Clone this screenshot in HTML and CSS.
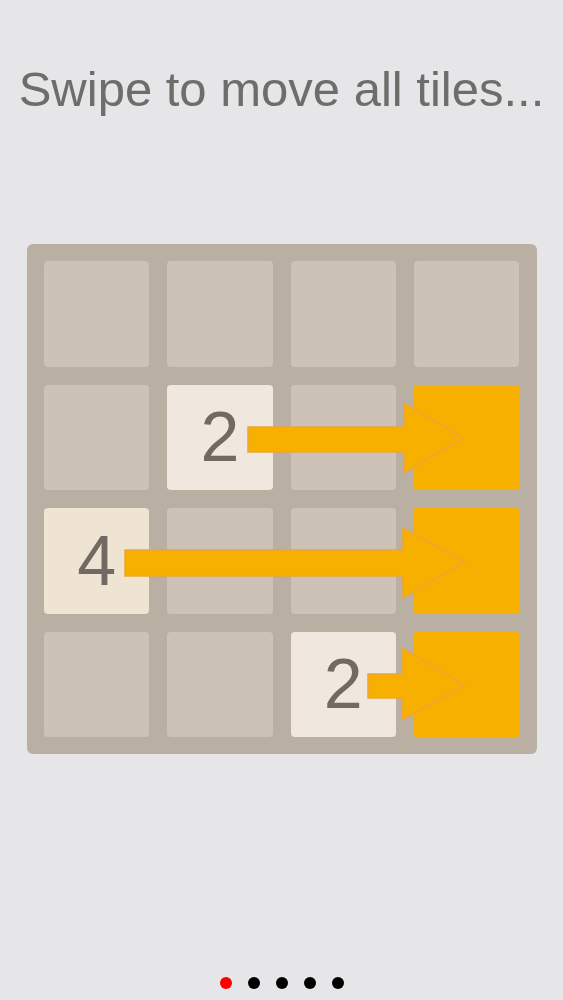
FILE: index.html
```html
<!DOCTYPE html>
<html lang="en">
<head>
  <meta charset="UTF-8">
  <meta name="viewport" content="width=device-width, initial-scale=1.0">
  <title>2048 - How to play</title>
  <link rel="stylesheet" href="styles.css">
</head>
<body>
  <div class="screen">
    <h1 class="hint">Swipe to move all tiles...</h1>

    <div class="board">
      <div class="grid">
        <!-- row 1 -->
        <div class="cell"></div>
        <div class="cell"></div>
        <div class="cell"></div>
        <div class="cell"></div>
        <!-- row 2 -->
        <div class="cell"></div>
        <div class="cell tile-2">2</div>
        <div class="cell"></div>
        <div class="cell target"></div>
        <!-- row 3 -->
        <div class="cell tile-4">4</div>
        <div class="cell"></div>
        <div class="cell"></div>
        <div class="cell target"></div>
        <!-- row 4 -->
        <div class="cell"></div>
        <div class="cell"></div>
        <div class="cell tile-2">2</div>
        <div class="cell target"></div>
      </div>

      <!-- movement arrows drawn over the grid -->
      <svg class="arrows" viewBox="0 0 510 510" aria-hidden="true">
        <g fill="#f8b000" stroke="#eda534" stroke-width="1.5" stroke-linejoin="miter">
          <polygon points="221,183 377,183 377,159 436,194 377,229 377,208 221,208" />
          <polygon points="98,306 376,306 376,284 438,318 376,354 376,332 98,332" />
          <polygon points="341,430 375,430 375,404 438,441 375,476 375,454 341,454" />
        </g>
      </svg>
    </div>

    <div class="pager">
      <span class="dot active"></span>
      <span class="dot"></span>
      <span class="dot"></span>
      <span class="dot"></span>
      <span class="dot"></span>
    </div>
  </div>
</body>
</html>
```

FILE: styles.css
```css
body {
  margin: 0;
  background-color: #e6e5e7;
  font-family: 'Liberation Sans', Arial, sans-serif;
}
.screen {
  display: flex;
  flex-direction: column;
  align-items: center;
  height: 1000px;
}
.hint {
  margin: 0;
  padding-top: 61px;
  font-size: 49px;
  font-weight: normal;
  line-height: 56px;
  color: #6f6d6a;
  white-space: nowrap;
}
.board {
  position: relative;
  width: 510px;
  height: 510px;
  margin-top: 127px;
  margin-left: 1px;
  box-sizing: border-box;
  padding: 17px 18px 17px 17px;
  background-color: #baafa3;
  border-radius: 6px;
}
.grid {
  display: grid;
  grid-template-columns: repeat(4, 1fr);
  grid-template-rows: repeat(4, 1fr);
  gap: 18px;
  height: 100%;
}
.cell {
  display: flex;
  justify-content: center;
  align-items: center;
  background-color: #cdc2b7;
  border-radius: 4px;
  font-size: 70px;
  color: #716a62;
}
.tile-2 {
  background-color: #f0e7de;
}
.tile-4 {
  background-color: #eee4d1;
}
.target {
  background-color: #f8b000;
  border-radius: 2px;
}
.arrows {
  position: absolute;
  top: 0;
  left: 0;
  width: 510px;
  height: 510px;
}
.pager {
  display: flex;
  gap: 16px;
  margin-top: 223px;
}
.dot {
  width: 12px;
  height: 12px;
  border-radius: 50%;
  background-color: #000;
}
.dot.active {
  background-color: #f00;
}
```
